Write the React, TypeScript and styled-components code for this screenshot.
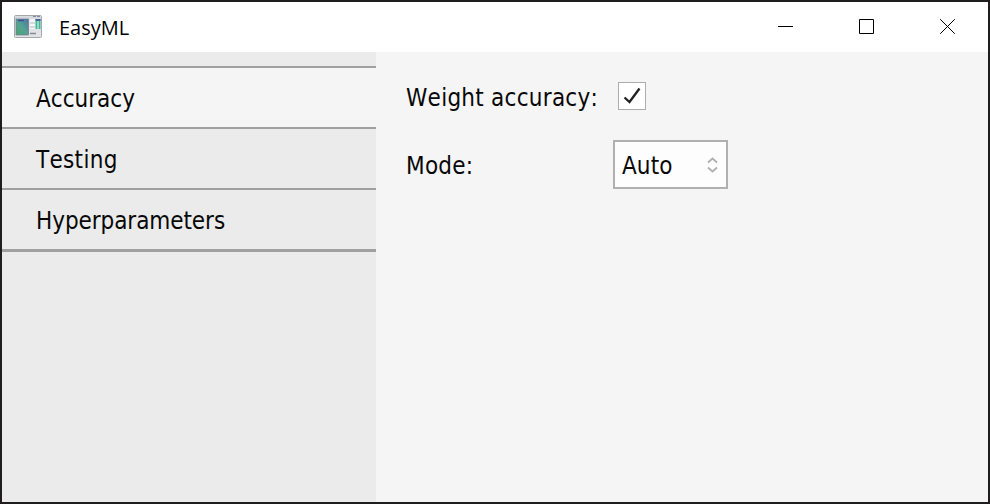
import React from 'react';
import styled, { createGlobalStyle } from 'styled-components';

const GlobalStyle = createGlobalStyle`
  * { box-sizing: border-box; }
  body { margin: 0; overflow: hidden; }
  button { font: inherit; color: inherit; letter-spacing: inherit; }
`;

const Window = styled.div`
  display: flex;
  flex-direction: column;
  width: 990px;
  height: 504px;
  border: 2px solid #1f1d1e;
  background: #f5f5f5;
  color: #080808;
  font-family: 'DejaVu Sans Condensed', 'DejaVu Sans', sans-serif;
  font-stretch: condensed;
  font-size: 24px;
  line-height: 30px;
`;

const TitleBar = styled.header`
  display: flex;
  align-items: center;
  height: 50px;
  flex: none;
  padding-left: 11px;
  background: #fff;
`;

const Title = styled.h1`
  flex: 1;
  margin: 2px 0 0 16px;
  font: 400 20px/26px 'Open Sans', 'Noto Sans', sans-serif;
  color: #000;
`;

const CaptionButton = styled.button`
  display: grid;
  place-items: center;
  width: 81px;
  height: 50px;
  padding: 0 0 1px;
  border: 0;
  background: none;
`;

const Body = styled.div`
  display: flex;
  flex: 1;
`;

const Sidebar = styled.nav`
  width: 374px;
  padding-top: 14px;
  background: #ebebeb;
`;

const Tabs = styled.div`
  display: flex;
  flex-direction: column;
  border-bottom: 3px solid #a0a0a0;
`;

const Tab = styled.button<{ $active?: boolean; $spacing: number }>`
  height: 61px;
  padding: 3px 0 0 34px;
  border: 0;
  border-top: 2px solid #a0a0a0;
  background: ${(p) => (p.$active ? '#f5f5f5' : '#ebebeb')};
  text-align: left;
  font-kerning: none;
  letter-spacing: ${(p) => p.$spacing}px;
`;

const Form = styled.main`
  display: grid;
  grid-template-columns: 207px auto;
  grid-template-rows: 28px 49px;
  row-gap: 30px;
  align-content: start;
  align-items: center;
  justify-content: start;
  padding: 30px 0 0 30px;
`;

const Label = styled.label<{ $spacing: number; $top: number }>`
  padding-top: ${(p) => p.$top}px;
  white-space: nowrap;
  font-kerning: none;
  letter-spacing: ${(p) => p.$spacing}px;
`;

const Checkbox = styled.button`
  display: grid;
  width: 28px;
  height: 28px;
  margin-left: 5px;
  padding: 0;
  border: 1px solid #adadad;
  background: #fff;
`;

const Select = styled.button`
  display: flex;
  align-items: center;
  justify-content: space-between;
  width: 115px;
  height: 49px;
  padding: 2px 8px 0 7px;
  border: 2px solid #b0b0b0;
  background: #fdfdfd;
  letter-spacing: 0.1px;
`;

const Arrows = styled.svg`
  margin-bottom: 2px;
`;

const tabs = [
  { label: 'Accuracy', spacing: 0 },
  { label: 'Testing', spacing: 0.3 },
  { label: 'Hyperparameters', spacing: -0.07 },
];

function AppIcon() {
  return (
    <svg width="30" height="26" viewBox="0 0 30 26">
      <defs>
        <linearGradient id="pane" x1="1" y1="0" x2="0" y2="1">
          <stop offset="0" stopColor="#4b76a0" />
          <stop offset="0.5" stopColor="#55a193" />
          <stop offset="1" stopColor="#48a873" />
        </linearGradient>
      </defs>
      <rect x="1.5" y="1.5" width="27" height="22" rx="1" fill="#e2e3e6" stroke="#a5a8aa" />
      <path d="M2 3.5h26" stroke="#d1d6df" strokeWidth="2" />
      <path d="M20 2.5h3m1 0h3" stroke="#858b94" />
      <rect x="3" y="5" width="12.5" height="16" fill="url(#pane)" stroke="#72758f" strokeWidth=".7" />
      <path d="M5 6.5h6" stroke="#464a94" strokeWidth="1.5" />
      <rect x="17" y="5" width="10" height="10" fill="#f4f5f6" />
      <path d="M17 9h5m-5 4h5" stroke="#b7babf" />
      <path d="M23.5 5v10m3-10v10" stroke="#3fb69b" strokeWidth="2" />
      <path d="M22.5 6h5" stroke="#4a6399" strokeWidth="2" />
      <path d="M17 19.5h6" stroke="#888b90" strokeWidth="1.5" />
    </svg>
  );
}

export default function App() {
  return (
    <>
      <GlobalStyle />
      <Window>
        <TitleBar>
          <AppIcon />
          <Title>EasyML</Title>
          <CaptionButton aria-label="Minimize">
            <svg width="15" height="15"><path d="M0 7.5h15" stroke="#000" /></svg>
          </CaptionButton>
          <CaptionButton aria-label="Maximize">
            <svg width="15" height="15"><path d="M.5.5h14v14H.5z" fill="none" stroke="#000" /></svg>
          </CaptionButton>
          <CaptionButton aria-label="Close">
            <svg width="15" height="15"><path d="M.2.2l14.6 14.6M14.8.2L.2 14.8" stroke="#000" /></svg>
          </CaptionButton>
        </TitleBar>
        <Body>
          <Sidebar>
            <Tabs>
              {tabs.map((t, i) => (
                <Tab key={t.label} $active={i === 0} $spacing={t.spacing}>{t.label}</Tab>
              ))}
            </Tabs>
          </Sidebar>
          <Form>
            <Label $spacing={0.25} $top={4}>Weight accuracy:</Label>
            <Checkbox aria-label="Weight accuracy">
              <svg width="26" height="26">
                <path d="M5.5 14.5l5 4.5L20.5 5.5" fill="none" stroke="#222" strokeWidth="2.3" />
              </svg>
            </Checkbox>
            <Label $spacing={0.25} $top={2}>Mode:</Label>
            <Select>
              Auto
              <Arrows width="11" height="16">
                <path d="M1 5.5L5.5 1.5 10 5.5M1 10.5l4.5 4 4.5-4" fill="none" stroke="#b0b0b0" strokeWidth="1.8" />
              </Arrows>
            </Select>
          </Form>
        </Body>
      </Window>
    </>
  );
}
